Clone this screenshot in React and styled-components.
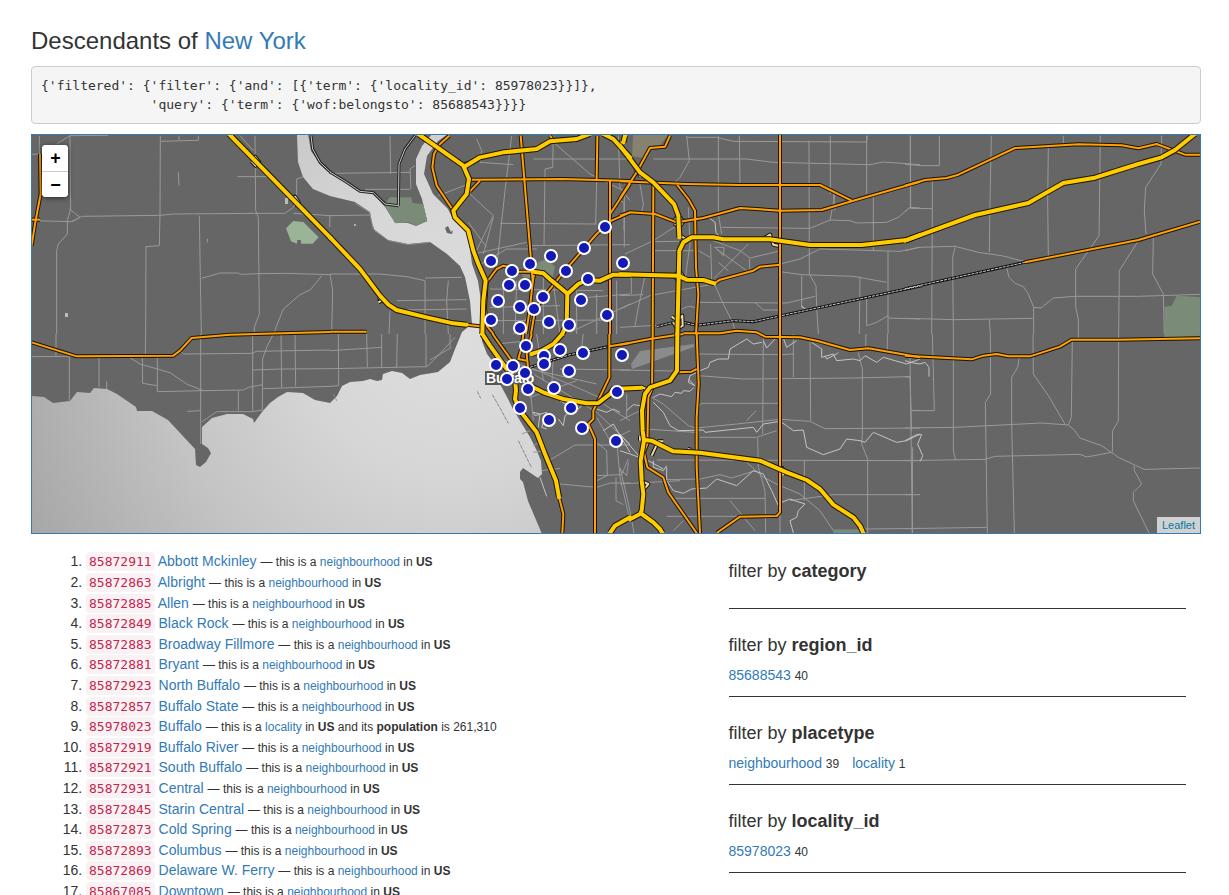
import React from "react";
import styled, { createGlobalStyle } from "styled-components";

const sans = '"Liberation Sans", Arial, sans-serif';
const mono = '"DejaVu Sans Mono", monospace';

const GlobalStyle = createGlobalStyle`
  *, *::before, *::after { box-sizing: border-box; }
  body {
    margin: 0;
    background: #fff;
    color: #333;
    font: 14px/20px ${sans};
  }
`;

const Page = styled.main`
  padding: 27px 28px 0 31px;
`;

const Link = styled.a`
  color: #337ab7;
  text-decoration: none;
  &:hover { text-decoration: underline; }
`;

const Title = styled.h1`
  margin: 0 0 12px;
  font-size: 24px;
  line-height: 27px;
  font-weight: 400;
`;

const Query = styled.pre`
  margin: 0 0 10px;
  padding: 9px;
  border: 1px solid #ccc;
  border-radius: 4px;
  background: #f5f5f5;
  font-family: ${mono};
  font-size: 13px;
  line-height: 19px;
  overflow-x: auto;
`;

const MapFrame = styled.section`
  position: relative;
  height: 400px;
  border: 1px solid #337ab7;
  background: #666;
  overflow: hidden;
`;

const MapDrawing = styled.svg`
  display: block;
  width: 100%;
  height: 100%;
`;

const ZoomControl = styled.div`
  position: absolute;
  top: 10px;
  left: 10px;
  width: 26px;
  border-radius: 4px;
  background: #fff;
  box-shadow: 0 1px 5px rgba(0, 0, 0, 0.65);
  overflow: hidden;
`;

const ZoomButton = styled.button`
  display: flex;
  align-items: center;
  justify-content: center;
  width: 26px;
  height: 26px;
  padding: 0 0 0 1px;
  border: 0;
  border-top: ${(p) => (p.$divided ? "1px solid #ccc" : "0")};
  background: #fff;
  color: #000;
  font: bold 18px/26px ${sans};
  cursor: pointer;
`;

const Attribution = styled.div`
  position: absolute;
  right: 0;
  bottom: 0;
  padding: 0 5px;
  background: rgba(255, 255, 255, 0.7);
  font-size: 11px;
  line-height: 16px;
  a { color: #0078a8; }
`;

const Columns = styled.div`
  display: grid;
  grid-template-columns: 7fr 5fr;
  margin-top: 17px;
`;

const Column = styled.div`
  min-width: 0;
  padding: 0 15px;
`;

const Results = styled.ol`
  display: grid;
  grid-auto-rows: 21px 21px 20px 21px 20px;
  margin: 0;
  padding: 0 0 0 40px;
`;

const Code = styled.code`
  padding: 2px 3px;
  border-radius: 4px;
  background: #f9f2f4;
  color: #c7254e;
  font-family: ${mono};
  font-size: 13px;
  line-height: 20px;
`;

const Note = styled.small`
  font-size: 12px;
  line-height: 16px;
`;

const Filter = styled.section`
  padding: ${(p) => (p.$first ? "10px" : "26px")} 0 11px;
  border-bottom: 1px solid #333;
`;

const FilterHeading = styled.h2`
  margin: 0 0 10px;
  font-size: 18px;
  line-height: 20px;
  font-weight: 400;
`;

const FilterList = styled.ul`
  display: flex;
  flex-wrap: wrap;
  gap: 13px;
  min-height: 6px;
  margin: 0;
  padding: 0;
  list-style: none;
`;

/* Map tiles: origin of each tile; lines inside a tile are in thirds of a pixel. */
const origin = {
  A: [30, 134], B: [330, 134], C: [620, 134], D: [905, 134],
  E: [30, 334], F: [330, 334], G: [620, 334], H: [905, 334],
};

const place = (tile, line) =>
  line
    .split(" ")
    .map((pair) => {
      const [x, y] = pair.split(",").map(Number);
      return `${origin[tile][0] + x / 3},${origin[tile][1] + y / 3}`;
    })
    .join(" ");

const layer = (tiles) =>
  Object.entries(tiles).flatMap(([tile, lines]) => lines.map((l) => place(tile, l)));

const water =
  "32,396 44,397 53,403 70,401 77,392 90,393 94,388 107,389 117,394 136,407 137,411 152,411 168,420 195,449 196,465 200,467 206,462 211,453 208,448 202,444 202,427 212,418 227,414 243,414 253,419 254,423 262,412 270,403 278,397 287,392 303,393 315,400 330,403 337,396 342,386 350,382 363,381 370,379 377,381 382,380 383,374 392,371 402,373 410,379 420,375 438,372 450,362 455,349 460,337 462,332 472,324 470,301 465,277 460,266 447,254 430,242 408,244 388,240 375,231 372,224 370,212 355,202 330,196 313,189 303,177 298,162 297,134 308,134 311,151 320,164 330,172 347,182 360,191 373,193 385,207 395,222 408,223 416,226 427,221 422,199 416,184 416,159 422,146 432,134 448,134 438,141 427,156 424,174 433,194 448,209 453,219 468,234 472,264 478,281 481,301 480,321 482,341 487,354 497,367 500,384 507,397 513,409 522,424 530,437 537,451 541,461 542,474 538,478 523,468 520,472 520,479 523,482 528,501 542,534 31,534";

const parks = layer({
  B: [
    "162,212 180,190 243,190 248,207 280,210 292,262 258,275 235,265 195,268",
    "625,385 650,375 675,398 668,430 640,412 615,410",
    "575,420 605,422 605,432 580,430",
  ],
  D: ["778,518 800,515 815,485 885,489 885,600 780,600"],
  G: ["640,586 735,586 735,597 640,597"],
  H: ["778,0 885,0 885,5 778,12"],
});
const brightParks = layer({
  A: ["768,283 790,261 820,264 866,310 848,329 814,329 812,318 802,318 801,329 783,322"],
});

const minor = layer({
  A: [
    "28,5 28,60 5,61", "120,5 122,225 112,260 112,300 85,330 80,350 80,600", "80,30 120,5 235,4",
    "391,5 390,240 388,335 348,338 347,600", "5,260 128,263 155,247 390,244 430,240 680,238 765,238 790,220 800,195 800,135 820,128",
    "391,22 505,19 505,5", "447,5 447,18", "445,115 447,155", "508,245 511,430 514,600",
    "675,5 677,230 685,250 688,540 673,580 673,600", "515,433 570,417 625,417 632,421 690,419 770,418 900,422",
    "875,425 860,445 840,468 810,482 760,525 742,570 732,597", "622,128 720,128", "790,238 900,245 899,280",
    "630,5 670,50", "118,225 150,250 125,262", "532,315 532,325",
  ],
  B: [
    "180,5 182,120", "10,118 240,115", "0,245 120,243", "243,165 240,105 255,95", "105,166 240,166",
    "0,420 150,420 230,428 285,440 285,600", "285,432 395,430", "200,500 410,497", "180,530 177,600", "355,440 350,500 355,600",
    "200,528 410,525", "0,420 8,470 5,600", "440,15 455,50 450,85 550,92", "545,5 525,170 500,400", "415,150 325,185",
    "420,180 490,245 430,370", "490,250 460,360", "415,265 470,340", "670,5 668,100 645,105 642,335",
    "610,75 900,75", "665,20 780,120 880,170", "800,140 797,270", "510,268 800,270", "590,335 900,332", "865,5 870,160 900,200",
    "430,360 590,325", "445,395 530,345 620,345", "560,440 555,600", "520,460 520,600", "480,465 820,470", "480,520 690,515",
    "640,430 640,600", "670,450 690,600", "500,560 830,558", "740,470 740,600", "775,490 900,480", "720,595 900,510",
    "800,480 800,600", "860,440 860,600", "550,600 640,490", "883,180 883,340",
  ],
  C: [
    "200,5 208,80 180,130 165,145", "100,75 380,75 460,85 750,92 790,84 900,92", "200,10 290,10 340,22 740,24 742,5",
    "295,5 295,240 305,300", "358,5 360,150", "631,5 631,180", "740,5 740,180", "567,20 568,420 588,455 590,520 595,600",
    "871,5 872,220", "630,260 645,180", "760,190 760,350", "305,280 570,283 630,258 690,260 710,267 800,265 835,250 870,220 900,222",
    "480,390 540,375 600,345 840,352 900,340", "480,413 545,422 700,427 800,445", "545,425 545,520 558,525",
    "0,525 90,485 180,468 283,450 310,510 340,570 345,590", "0,580 110,574", "230,505 500,507 585,487", "405,505 430,528 480,528",
    "60,150 70,210 65,235", "15,360 100,320 170,275", "75,425 55,520 45,575", "0,485 70,482", "0,200 12,205 12,290",
    "100,350 230,350", "235,350 270,370", "720,427 718,600", "740,490 740,575 770,565 804,545", "804,350 804,600",
    "805,552 900,555", "272,330 275,440", "280,320 360,350 390,372 475,352", "283,432 385,330", "290,345 380,410", "295,385 325,410",
    "283,340 312,340 310,365 285,340", "388,375 390,410", "205,220 210,330 195,440", "100,323 180,322", "34,420 34,480",
    "640,177 645,230", "185,525 205,517 225,520",
  ],
  D: [
    "16,5 16,220 0,232", "0,91 50,95 103,95 103,5", "16,223 82,224 82,140", "82,224 80,600", "259,5 255,200 253,355",
    "430,40 428,200 430,365", "475,5 475,30", "586,5 582,305 512,405 512,520 520,555 520,600", "770,5 768,90 722,160 718,230 723,300",
    "0,350 40,340 150,337 220,355 290,365 360,383", "150,340 143,370 145,600", "305,400 312,430 330,448 355,458 370,480 386,520 408,522 445,492 510,487 700,487 885,481",
    "386,520 386,600", "0,553 150,557 383,553", "253,557 256,600", "697,325 643,410 641,600", "745,310 743,420 775,480 778,600",
  ],
  E: [
    "78,0 78,65", "347,0 346,63", "118,68 118,200", "207,68 207,160", "5,68 140,67", "230,142 230,165",
    "295,68 330,90 420,116 470,150 520,170 640,168 655,160 697,152", "337,68 338,148 382,155", "382,67 382,173 520,170",
    "512,0 512,330", "450,50 460,60 665,58 680,52 900,48", "668,0 668,230", "730,0 710,40 698,75 697,230",
    "667,108 755,105 900,104", "700,164 900,157", "753,0 755,160", "795,0 797,157", "515,264 560,233 668,233 697,228",
    "625,170 625,230", "472,232 512,230",
  ],
  F: [
    "25,0 26,155 0,157", "110,0 112,100", "0,50 155,40", "155,0 155,100", "202,0 200,100", "0,104 290,98 310,80 375,10",
    "288,0 288,98", "300,78 365,40", "360,0 360,40", "500,30 600,20", "520,80 600,100 740,160 830,200", "610,120 710,180 800,235 900,330",
    "600,105 800,150", "690,105 900,108", "620,0 640,140", "760,0 755,40", "670,70 665,160", "690,450 800,460 840,447 900,447",
    "660,378 735,333 900,333", "800,325 830,350 832,425 800,440", "800,425 875,422 895,375", "860,320 870,430 900,560",
    "858,430 858,500 880,512", "800,250 840,320 900,290", "890,180 890,250", "600,155 610,260", "560,80 600,190 740,140",
    "820,210 900,260", "635,410 690,403", "575,300 600,290", "610,335 628,325", "610,355 633,352",
  ],
  G: [
    "430,0 428,300", "520,0 520,130", "570,10 572,260", "738,0 737,40", "802,0 802,50", "715,55 727,105 727,300",
    "230,60 480,62 520,60", "235,125 370,135 700,132 870,128 875,290", "245,208 475,208", "235,217 247,208",
    "230,282 350,270 480,256 570,262 615,284 900,282", "240,310 410,310 470,290", "413,312 415,400 435,470 437,597",
    "110,378 900,380", "150,493 435,493", "727,300 725,330 743,375 743,597", "553,380 553,500", "480,0 480,597",
    "95,190 130,210 205,275 230,283", "125,437 240,435 300,422 335,432 405,410", "380,385 430,430 480,455 540,480 600,530 640,590",
    "878,340 877,597", "640,482 900,482", "510,500 640,482", "735,585 900,583", "0,405 20,425 25,385", "0,400 30,530 42,597",
    "330,500 405,590", "160,590 190,560", "0,108 225,112", "140,547 360,547", "75,285 225,295", "380,260 408,230",
    "0,260 60,230", "180,440 0,450", "875,230 900,229",
  ],
  H: [
    "15,70 22,597", "82,0 88,230 22,230", "145,0 145,350 152,378", "256,0 257,180 241,205 247,597", "343,70 338,100 320,130 320,270 328,597",
    "384,0 385,120 430,185 480,270", "520,0 520,17", "502,17 499,250 490,273", "641,0 640,260 623,290 622,355",
    "0,282 150,280 410,267 490,273 507,287 525,312 590,335 640,370 717,406 885,402", "0,380 240,376 270,367 525,361 545,369 620,355",
    "0,584 245,580", "687,395 688,410 710,450 685,475 685,500 732,597", "0,128 15,130", "0,482 22,482",
  ],
});

const creeks = layer({
  C: ["265,250 285,265 288,295 310,325", "545,515 555,525"],
  F: [
    "625,280 630,240 610,235 615,245 650,235 635,280 650,285", "685,255 700,275 705,245 740,220 720,200",
    "630,430 650,487", "800,225 830,235 850,225 870,235", "820,290 850,270 900,355", "690,200 740,230 755,215",
  ],
  G: [
    "205,135 225,155 205,145 210,125 240,110 265,100 270,85 295,75 325,75 330,45 380,15 400,30 425,25",
    "222,160 210,172 190,170 185,178 165,175 155,188 120,180 100,190", "430,20 440,42 468,12", "490,12 500,40 530,20",
    "575,25 605,45 605,70 640,60 650,80 700,75 720,80 735,65 770,85 790,70 860,90 900,75", "615,65 620,75 650,60 655,55",
    "100,205 130,235 150,275 175,290 250,288 255,295 400,280 410,295 430,270 480,262 500,275 520,290 550,288 560,340 610,362 660,345 680,315 720,320 735,325 760,295 830,325 860,320 900,300",
    "20,230 40,212 60,215", "140,400 140,440 160,470 190,478 215,465 260,462 290,435 350,455 400,410 430,420 455,470 475,515",
    "485,505 510,495 555,510 535,530 530,550 510,560 520,597", "0,350 30,360 85,380 130,405", "0,300 60,370",
    "100,380 100,400 130,410 140,395",
  ],
  H: ["0,80 15,85 45,90 60,85 72,100 72,128", "0,320 35,302 50,302 38,330 53,365 46,382"],
});

const parkway = layer({
  A: ["843,5 848,45 870,85 903,116"],
  B: ["0,114 50,145 90,172 130,176 165,210 205,215", "205,215 207,90 225,45 255,5"],
});

const southShore = layer({
  B: ["75,208 118,235 130,285 175,320 235,332 300,325"],
});

const breakwaters = layer({
  F: ["442,172 452,193", "487,182 510,222 535,268", "565,320 605,402", "10,180 20,200"],
});

const trunk = layer({
  A: ["30,60 32,180 15,270 5,335", "0,257 30,257"],
  B: [
    "0,593 110,593", "410,572 450,577", "358,5 330,30 312,60 307,100 320,155 370,230", "420,137 700,135 900,141", "420,172 450,140",
    "572,5 580,100 605,400 608,445 600,520 588,600", "660,5 670,20", "802,5 800,135", "840,140 840,600", "900,150 840,240",
    "900,235 840,262 800,300 700,415 640,490 615,530 603,600", "470,445 500,405 520,395 545,400 560,413 610,413",
    "470,445 465,520 470,575 490,600", "608,445 613,415",
  ],
  C: [
    "0,142 200,150 360,153 600,153 695,200", "0,193 50,115 90,42 135,38 150,5", "100,150 98,600",
    "172,153 205,195 225,230 228,400 235,480 228,600", "0,245 30,235 105,240 170,265 250,252 360,222 480,230 605,228 700,200 900,143",
    "480,0 480,600", "283,448 300,437 400,410 420,398 480,392", "190,598 300,598 350,590 410,595 420,600",
  ],
  D: ["0,155 60,138 125,132 160,122 330,42 520,31 650,34 700,43 755,30 840,62 885,62", "360,385 700,318 885,263"],
  E: ["5,25 140,67 430,65 450,50 485,12 600,2 900,-6"],
  F: [
    "488,0 520,45 545,80", "580,0 575,40 565,75 590,80", "605,0 590,60 595,110",
    "838,0 838,130 790,230 790,255 775,270 795,315 795,597", "838,37 900,27", "687,490 700,540 697,597",
  ],
  G: [
    "0,32 90,15 190,0", "98,0 96,165 85,190 82,330 72,355 82,400 130,430 145,475 230,597",
    "230,0 236,150 230,250 230,400 240,597", "172,115 215,113 230,105",
    "420,0 435,8 540,10 590,20 690,48 745,43 900,70", "480,0 480,535 470,546 360,548 290,597",
  ],
  H: ["0,65 200,76 235,65 275,60 310,67 375,67 465,38 500,17 640,17 885,13"],
});

const motorway = layer({
  A: ["597,0 903,313"],
  B: [
    "0,310 90,405 150,485 175,512 200,528 290,550 370,568 410,572",
    "265,0 400,95 417,135 410,180 370,230 375,250 415,290 430,350 445,390 467,440 460,500 457,600",
    "408,95 450,70 520,55 620,45 660,22 740,15 780,0", "820,0 850,15 900,70", "885,5 880,25",
    "610,413 640,418 665,440 710,477", "900,422 850,422 810,440 770,438 745,450 712,480 710,570 697,600",
  ],
  C: [
    "0,35 60,115 100,145 162,210 175,245 178,310", "0,421 175,425 200,437 250,438 283,448",
    "172,600 178,350 190,325 215,310 280,310 310,316 450,316 480,320 570,333 725,333 860,318 900,303",
  ],
  D: ["0,320 210,243 370,207 475,147 570,131 700,90 770,70 810,48 870,0"],
  F: [
    "697,0 670,30 635,50 605,60", "457,0 480,35 530,105 555,135 558,170 555,195 570,230 620,295 645,360 678,440 687,490",
    "600,155 640,175 700,195 770,208 805,207 840,180 850,165 935,161", "900,550 855,575 840,597",
  ],
  G: [
    "172,0 171,110 150,140 90,160 75,180 66,230 68,290 72,320 62,380 65,440 70,480 65,530 60,540 30,556",
    "65,540 100,565 120,585 127,597", "75,318 95,320 160,352 240,356 420,380 500,415 560,438 600,465 640,512 700,550 720,575 730,597",
  ],
});

const railway = layer({
  C: ["110,578 160,565", "190,565 230,574 340,560 400,563 905,455"],
  D: ["0,464 360,385"],
  F: ["600,100 720,62 840,37"],
});

const ramps = layer({
  A: ["665,75 675,68 688,85 676,95 665,82", "790,200 795,188 806,205 793,215"],
  B: ["403,90 412,88 410,100", "145,490 155,500 145,505", "875,20 870,30"],
  C: [
    "160,262 175,245 190,262 178,280 163,268", "178,302 200,318 180,328", "163,425 178,410 190,427 175,440 163,425",
    "155,548 172,560 187,545 188,575 172,585 160,565", "433,312 450,302 460,332 478,336", "48,105 62,128",
  ],
  G: ["95,365 115,322 130,322", "63,158 78,165", "62,440 85,450 75,462 60,455", "465,398 487,402 490,425", "203,345 215,348", "60,305 60,320"],
});

const markers = [
  [605, 227], [584, 248], [551, 256], [530, 264], [491, 261], [512, 271], [566, 271], [623, 263], [588, 279], [509, 285],
  [525, 285], [498, 301], [543, 297], [581, 300], [520, 307], [534, 309], [607, 315], [491, 320], [549, 322], [569, 325],
  [520, 328], [526, 346], [560, 350], [583, 353], [544, 356], [544, 364], [622, 355], [496, 365], [513, 366], [525, 373],
  [569, 371], [507, 379], [554, 388], [528, 389], [617, 392], [520, 408], [571, 408], [549, 420], [582, 428], [616, 441],
];

const Lines = ({ lines, ...stroke }) => (
  <g fill="none" strokeLinejoin="round" {...stroke}>
    {lines.map((points, i) => <polyline key={i} points={points} />)}
  </g>
);

const Areas = ({ areas, fill }) => (
  <g fill={fill}>{areas.map((points, i) => <polygon key={i} points={points} />)}</g>
);

function BuffaloMap() {
  return (
    <MapDrawing viewBox="32 135 1168 398" preserveAspectRatio="xMidYMid slice" role="img" aria-label="Map of Buffalo">
      <defs>
        <radialGradient id="lake" gradientUnits="userSpaceOnUse" cx="450" cy="330" r="480">
          <stop offset="0" stopColor="#dedede" />
          <stop offset="0.3" stopColor="#d6d6d6" />
          <stop offset="0.6" stopColor="#c4c4c4" />
          <stop offset="1" stopColor="#a4a4a4" />
        </radialGradient>
      </defs>
      <polygon points={water} fill="url(#lake)" />
      <Areas areas={brightParks} fill="#9bb497" />
      <Areas areas={parks} fill="#7a8b78" />
      <polygon points="633,135 668,135 658,148 651,148 643,158 632,156" fill="#86826f" />
      <polygon points="640,351 694,344 694,347 632,369 631,364" fill="#8b8b8b" />
      <polygon points="445,228 448,226 451,232 453,230 452,234 447,233" fill="#666" />
      <rect x="285" y="198" width="3" height="6" fill="#bbb" />
      <rect x="65" y="313" width="3" height="4" fill="#bbb" />
      <circle cx="355" cy="225" r="1" fill="#ccc" />
      <Lines lines={minor} stroke="#999" />
      <Lines lines={creeks} stroke="#c4c4c4" />
      <Lines lines={southShore} stroke="#8a8a8a" />
      <Lines lines={breakwaters} stroke="#888" strokeDasharray="4 1" />
      <Lines lines={parkway} stroke="#222" strokeWidth="3" />
      <Lines lines={parkway} stroke="#c8c8c8" />
      <Lines lines={railway} stroke="#111" strokeWidth="3" />
      <Lines lines={railway} stroke="#ccc" strokeDasharray="3 1" />
      <Lines lines={ramps} stroke="#111" strokeWidth="4" />
      <Lines lines={ramps} stroke="#f2d9a0" strokeWidth="2" />
      <Lines lines={trunk} stroke="#1c1400" strokeWidth="4" />
      <Lines lines={trunk} stroke="#ff9f0a" strokeWidth="2" />
      <Lines lines={motorway} stroke="#1c1400" strokeWidth="6" />
      <Lines lines={motorway} stroke="#fc0" strokeWidth="4" strokeLinecap="round" />
      <rect x="485" y="371" width="18" height="14" fill="#555" />
      <text
        x="486" y="383" fontFamily={sans} fontSize="14" fontWeight="700"
        fill="#fff" stroke="#555" strokeWidth="3" paintOrder="stroke"
      >
        Buffalo
      </text>
      <g fill="#1319b6" stroke="#fff" strokeWidth="2">
        {markers.map(([x, y]) => <circle key={`${x}-${y}`} cx={x} cy={y} r="6" />)}
      </g>
    </MapDrawing>
  );
}

const places = [
  ["85872911", "Abbott Mckinley"], ["85872863", "Albright"], ["85872885", "Allen"], ["85872849", "Black Rock"],
  ["85872883", "Broadway Fillmore"], ["85872881", "Bryant"], ["85872923", "North Buffalo"], ["85872857", "Buffalo State"],
  ["85978023", "Buffalo", "locality", "261,310"], ["85872919", "Buffalo River"], ["85872921", "South Buffalo"],
  ["85872931", "Central"], ["85872845", "Starin Central"], ["85872873", "Cold Spring"], ["85872893", "Columbus"],
  ["85872869", "Delaware W. Ferry"], ["85867085", "Downtown"],
];

const filters = [
  { name: "category", values: [] },
  { name: "region_id", values: [["85688543", 40]] },
  { name: "placetype", values: [["neighbourhood", 39], ["locality", 1]] },
  { name: "locality_id", values: [["85978023", 40]] },
];

const query = `{'filtered': {'filter': {'and': [{'term': {'locality_id': 85978023}}]},
              'query': {'term': {'wof:belongsto': 85688543}}}}`;

function Place({ id, name, type = "neighbourhood", population }) {
  return (
    <li>
      <Code>{id}</Code> <Link href={`#${id}`}>{name}</Link>{" "}
      <Note>
        — this is a <Link href={`#${type}`}>{type}</Link> in <strong>US</strong>
        {population && <> and its <strong>population</strong> is {population}</>}
      </Note>
    </li>
  );
}

export default function App() {
  return (
    <>
      <GlobalStyle />
      <Page>
        <Title>Descendants of <Link href="#new-york">New York</Link></Title>
        <Query>{query}</Query>
        <MapFrame>
          <BuffaloMap />
          <ZoomControl>
            <ZoomButton type="button" aria-label="Zoom in">+</ZoomButton>
            <ZoomButton type="button" aria-label="Zoom out" $divided>−</ZoomButton>
          </ZoomControl>
          <Attribution><Link href="#leaflet">Leaflet</Link></Attribution>
        </MapFrame>
        <Columns>
          <Column>
            <Results>
              {places.map(([id, name, type, population]) => (
                <Place key={id} id={id} name={name} type={type} population={population} />
              ))}
            </Results>
          </Column>
          <Column>
            {filters.map(({ name, values }, i) => (
              <Filter key={name} $first={i === 0}>
                <FilterHeading>filter by <strong>{name}</strong></FilterHeading>
                <FilterList>
                  {values.map(([label, count]) => (
                    <li key={label}><Link href={`#${label}`}>{label}</Link> <Note>{count}</Note></li>
                  ))}
                </FilterList>
              </Filter>
            ))}
          </Column>
        </Columns>
      </Page>
    </>
  );
}
